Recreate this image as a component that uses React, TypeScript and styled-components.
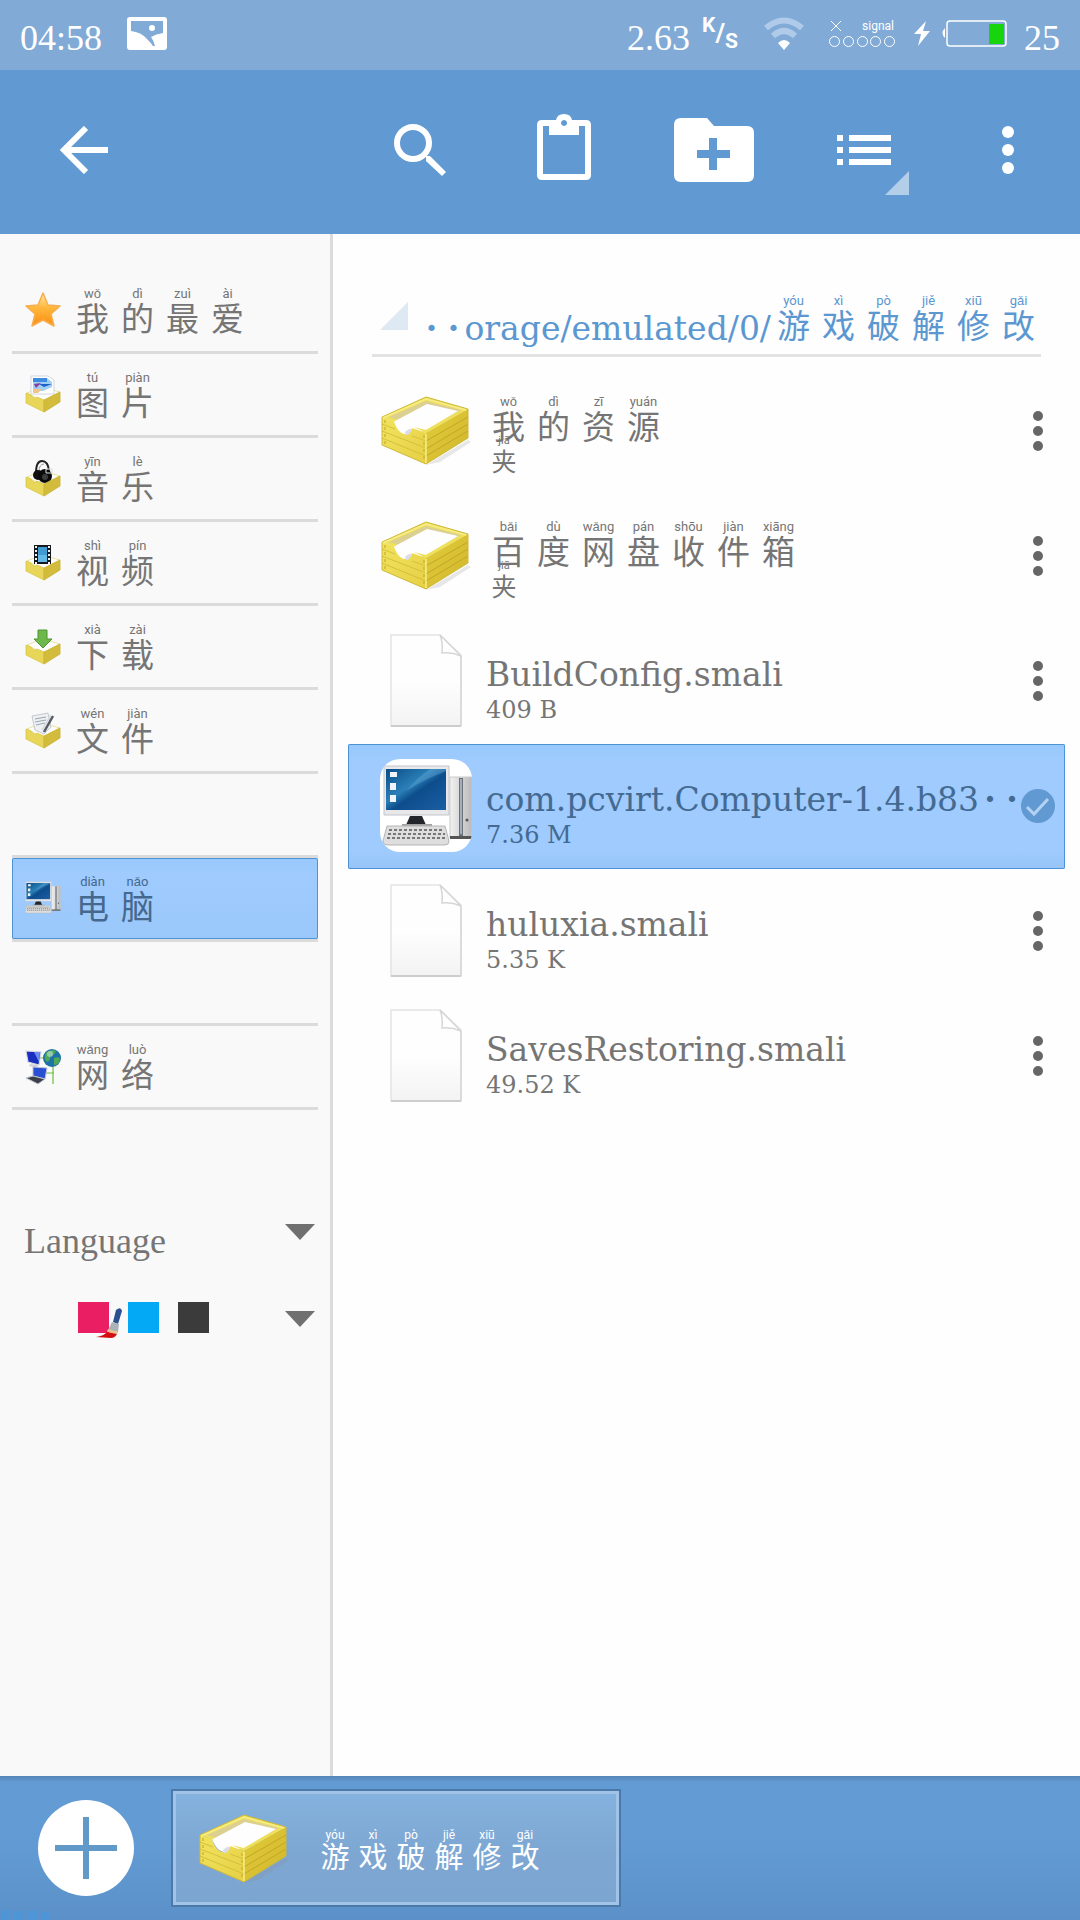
import React from "react";
import styled, { createGlobalStyle } from "styled-components";

const cjk = `"Noto Sans CJK SC", "Noto Sans", sans-serif`;
const serif = `"Liberation Serif", serif`;
const slab = `"DejaVu Serif", "Liberation Serif", serif`;

const GlobalStyle = createGlobalStyle`
  * { box-sizing: border-box; }
  body { margin: 0; background: #fefefe; font-family: ${slab}; color: #757575; }
  button, select { font: inherit; color: inherit; background: none; border: 0; padding: 0; margin: 0; }
  ul { list-style: none; margin: 0; padding: 0; }
  a { color: inherit; text-decoration: none; }
  svg { display: block; flex: none; }
`;

const Page = styled.div`
  display: flex;
  flex-direction: column;
  min-height: 100vh;
`;

/* ---------- status bar ---------- */

const StatusBar = styled.div`
  display: flex;
  align-items: center;
  height: 70px;
  padding: 4px 20px 8px 20px;
  background: #81abd6;
  color: #fff;
  font: 36px/40px ${serif};
`;

const Clock = styled.time`
  margin: 10px 25px 0 0;
`;

const StatusIcons = styled.div`
  display: flex;
  align-items: center;
  margin-left: auto;
`;

const StatusNumber = styled.span`
  margin-top: 10px;
`;

const Speed = styled.span`
  display: flex;
  height: 36px;
  margin: 0 25px 0 12px;
  font: bold 21px/20px Roboto, sans-serif;
`;

const SpeedPart = styled.span<{ $align: string; $size?: number }>`
  align-self: ${(p) => p.$align};
  font-size: ${(p) => p.$size ?? 21}px;
`;

const Signal = styled.span`
  display: flex;
  flex-direction: column;
  gap: 4px;
  width: 66px;
  margin: 0 19px 0 24px;
`;

const SignalTop = styled.span`
  display: flex;
  align-items: center;
  justify-content: space-between;
  padding: 0 1px 0 2px;
  font: 12px/12px Roboto, sans-serif;
`;

const SignalDots = styled.span`
  display: flex;
  justify-content: space-between;
`;

const SignalDot = styled.i`
  width: 11px;
  height: 11px;
  border: 1px solid #fff;
  border-radius: 50%;
`;

/* ---------- tool bar ---------- */

const ToolBar = styled.header`
  display: flex;
  height: 164px;
  background: #6199d3;
  color: #fff;
`;

const Spacer = styled.div`
  flex: 1;
`;

const ToolButton = styled.button<{ $width?: number }>`
  position: relative;
  display: flex;
  align-items: center;
  justify-content: center;
  width: ${(p) => p.$width ?? 144}px;
  padding-bottom: 4px;
`;

const Corner = styled.svg`
  position: absolute;
  right: 27px;
  bottom: 39px;
`;

/* ---------- text with pinyin ---------- */

const sizes = {
  large: { cell: 45, char: 33, line: 33, rt: 13, rtLine: 14 },
  medium: { cell: 38, char: 29, line: 28, rt: 12, rtLine: 12 },
  small: { cell: 36, char: 25, line: 26, rt: 11, rtLine: 12 },
};
type Size = keyof typeof sizes;

const RubyLine = styled.span`
  display: flex;
`;

const RubyCell = styled.ruby<{ $size: Size }>`
  display: flex;
  flex-direction: column-reverse;
  align-items: center;
  width: ${(p) => sizes[p.$size].cell}px;
  font-family: ${cjk};
  font-weight: 400;
  font-size: ${(p) => sizes[p.$size].char}px;
  line-height: ${(p) => sizes[p.$size].line}px;

  rt {
    display: block;
    font: 400 ${(p) => sizes[p.$size].rt}px / ${(p) => sizes[p.$size].rtLine}px
      "Liberation Sans Narrow", Roboto, sans-serif;
  }
`;

function Pinyin({ text, size = "large" }: { text: [string, string][]; size?: Size }) {
  return (
    <RubyLine>
      {text.map(([char, sound], i) => (
        <RubyCell key={i} $size={size}>
          {char}
          <rt>{sound}</rt>
        </RubyCell>
      ))}
    </RubyLine>
  );
}

/* ---------- side bar ---------- */

const Body = styled.div`
  display: flex;
  flex: 1;
`;

const SideBar = styled.nav`
  flex: 0 0 333px;
  padding: 36px 12px 0;
  background: #f9f9f9;
  border-right: 3px solid #dbdbdd;
`;

const SideGroup = styled.ul<{ $spaced?: boolean }>`
  margin-top: ${(p) => (p.$spaced ? 81 : 0)}px;
  border-top: ${(p) => (p.$spaced ? "3px solid #dbdbdb" : "0")};
`;

const SideItem = styled.li`
  border-bottom: 3px solid #dbdbdb;
`;

const SideLink = styled.a<{ $selected?: boolean }>`
  display: flex;
  align-items: center;
  gap: 8px;
  height: 81px;
  padding: 0 12px 1px;
  border-radius: 2px;
  color: ${(p) => (p.$selected ? "#46688c" : "#757575")};
  background: ${(p) => (p.$selected ? "linear-gradient(#97c8fc, #9fcbfe 20%, #9bc8fa)" : "none")};
  box-shadow: ${(p) => (p.$selected ? "inset 0 0 0 1px #4c94d6" : "none")};
`;

const SideOption = styled.div<{ $top: number }>`
  display: flex;
  align-items: flex-start;
  justify-content: space-between;
  margin: ${(p) => p.$top}px 3px 0 12px;
`;

const LanguageSelect = styled.select`
  flex: 1;
  height: 40px;
  appearance: none;
  font: 36px/40px ${serif};
`;

const Arrow = styled.svg<{ $top: number }>`
  margin-top: ${(p) => p.$top}px;
`;

const ThemeButton = styled.button`
  display: flex;
  flex: 1;
  align-items: flex-start;
  justify-content: space-between;
  height: 40px;
  padding-left: 54px;
`;

const Swatches = styled.span`
  position: relative;
  display: flex;
  gap: 19px;
`;

const Swatch = styled.i<{ $color: string }>`
  width: 31px;
  height: 31px;
  background: ${(p) => p.$color};
`;

const Brush = styled.svg`
  position: absolute;
  left: 18px;
  top: 5px;
`;

/* ---------- file list ---------- */

const Main = styled.main`
  flex: 1;
  min-width: 0;
  padding: 60px 15px 0;
`;

const PathBar = styled.div`
  display: flex;
  align-items: flex-end;
  justify-content: space-between;
  height: 63px;
  margin: 0 24px 12px;
  padding: 0 0 5px 8px;
  border-bottom: 3px solid #e3e3e3;
  color: #5b97d0;
  font: 33px/40px ${slab};
`;

const PathText = styled.span`
  display: flex;
  align-items: flex-end;
  white-space: nowrap;
`;

const PathFolder = styled.span`
  padding-bottom: 8px;
`;

const Dot = styled.span`
  display: inline-block;
  width: 22px;
  font-weight: bold;
  text-align: center;
`;

const FileRow = styled.li<{ $selected?: boolean }>`
  display: flex;
  height: 125px;
  padding: 0 9px 2px 30px;
  border-radius: 2px;
  color: ${(p) => (p.$selected ? "#446a92" : "#757575")};
  background: ${(p) => (p.$selected ? "linear-gradient(#97c8fc, #9fcbfe 12%, #9fcbfe 85%, #97c4f6)" : "none")};
  box-shadow: ${(p) => (p.$selected ? "inset 0 0 0 1px #4c94d6" : "none")};
`;

const FileIcon = styled.span`
  display: flex;
  align-items: center;
  justify-content: center;
  width: 96px;
  margin-right: 12px;
`;

const FileText = styled.div<{ $folder?: boolean }>`
  flex: 1;
  min-width: 0;
  padding-top: ${(p) => (p.$folder ? 26 : 36)}px;
  white-space: nowrap;
`;

const FileName = styled.div`
  font: 33px/40px ${slab};
`;

const FileSize = styled.div`
  font: 24px/30px ${slab};
`;

const FolderType = styled.div`
  margin-top: -7px;
`;

const RowAction = styled.button`
  display: flex;
  align-items: center;
  justify-content: center;
  width: 36px;
`;

/* ---------- task bar ---------- */

const TaskBar = styled.footer`
  position: relative;
  display: flex;
  height: 144px;
  padding: 13px 0 13px 38px;
  background: linear-gradient(#5685b8, #5c90c6 3px, #639bd4 6px, #629ad3 50%, #5b91c8);
  color: #fff;
`;

const AddButton = styled.button`
  display: flex;
  align-items: center;
  margin: 0 37px 0 0;
`;

const Task = styled.button`
  display: flex;
  align-items: center;
  width: 450px;
  padding: 2px 23px 0 25px;
  border: 2px solid #4b79aa;
  box-shadow: inset 0 0 0 3px #a0c3e7;
  background: linear-gradient(#84b2de, #7da6d2 60%, #7ca5d0);
`;

const TaskLabel = styled.span`
  margin: 0 0 0 26px;
`;

const Smudge = styled.svg`
  position: absolute;
  left: 0;
  bottom: 0;
`;

/* ---------- drawings ---------- */

function PaperBox() {
  return (
    <svg width="92" height="74" viewBox="0 0 92 74" aria-hidden="true">
      <defs>
        <linearGradient id="boxLeft" x1="0" y1="0" x2="1" y2="1">
          <stop offset="0" stopColor="#f1e35e" />
          <stop offset="1" stopColor="#e6d045" />
        </linearGradient>
        <linearGradient id="boxRight" x1="0" y1="0" x2="1" y2="1">
          <stop offset="0" stopColor="#e3cd3c" />
          <stop offset="1" stopColor="#d0b62a" />
        </linearGradient>
      </defs>
      <path d="M46 71 L88 46 L91 48 L60 68 Z" fill="#8d8d8d" opacity=".2" />
      <path d="M46 3 L88 15 L46 39 L2 23 Z" fill="#efe05c" />
      <path d="M46 7 L81 16 L46 35 L9 23 Z" fill="#dccf92" />
      <path d="M47 10 L78 17 L46 36 L33 40 L15 27 Z" fill="#fefeff" />
      <path d="M34 33 L46 36 L78 18 L88 15 L46 39 Z" fill="#efe05c" />
      <path d="M2 23 L14 27 C17 38 26 46 32 34 L46 39 L46 70 L2 51 Z" fill="url(#boxLeft)" />
      <path d="M14 27 L32 33 L32 35 C27 45 18 38 14 27 Z" fill="#fefeff" />
      <path d="M25 38 Q29 34 32 35 Q30 41 26 41 Z" fill="#dcdce8" />
      <path d="M46 39 L88 15 L88 44 L46 70 Z" fill="url(#boxRight)" />
      <path d="M2 30 L15 35 M2 37 L46 54 M2 44 L46 62 M32 42 L46 47" stroke="#d6c03c" strokeWidth="1" fill="none" />
      <path d="M46 47 L88 23 M46 55 L88 30 M46 62 L88 37" stroke="#c1a728" strokeWidth="1" fill="none" />
      <path d="M5 26 V52 M44 41 V68" stroke="#cfb732" strokeWidth="1.5" strokeDasharray="3 4" fill="none" />
      <path d="M2 23 L46 3 L88 15 V44 L46 70 L2 51 Z" fill="none" stroke="#cdb83a" strokeWidth="1" />
      <path d="M3 24 L46 5 L86 16 M46 40 V69" stroke="#f6ed86" strokeWidth="1.5" fill="none" />
    </svg>
  );
}

function SmallBox({ children }: { children: React.ReactNode }) {
  return (
    <svg width="38" height="38" viewBox="0 0 38 38" aria-hidden="true">
      <path d="M3 18 L18 12 L36 17 L19 26 Z" fill="#fdfdfd" stroke="#e6dc86" strokeWidth=".8" />
      {children}
      <path d="M2 18 L7 20 Q10 25 13 22 L20 25 L20 37 L2 28 Z" fill="#e8d658" stroke="#d8c54a" strokeWidth=".8" />
      <path d="M20 25 L36 17 L36 27 L20 37 Z" fill="#d3bc3c" stroke="#c8b036" strokeWidth=".8" />
    </svg>
  );
}

function StarIcon() {
  return (
    <svg width="38" height="38" viewBox="0 0 38 38" aria-hidden="true">
      <defs>
        <linearGradient id="star" x1="0" y1="0" x2="0" y2="1">
          <stop offset="0" stopColor="#ffeaa0" />
          <stop offset=".45" stopColor="#ffb73c" />
          <stop offset="1" stopColor="#f98d12" />
        </linearGradient>
      </defs>
      <path d="M19 2 L24 14 L36 15 L27 23 L30 35 L19 29 L8 35 L11 23 L2 15 L14 14 Z" fill="url(#star)" stroke="#f6ae50" strokeWidth="1.5" strokeLinejoin="round" />
    </svg>
  );
}

const PictureBox = () => (
  <SmallBox>
    <path d="M7 1 H24 L30 5 V19 H7 Z" fill="#fff" stroke="#c4cbd8" strokeWidth=".8" />
    <path d="M9 3 H23 L28 7 V12 L19 16 H9 Z" fill="#9fcdf4" />
    <path d="M9 3 H23 V7 H9 Z" fill="#3d8be0" />
    <path d="M15 9 H28 L20 12 Z" fill="#1c62c4" />
    <path d="M10 9 L17 8 L12 13 Z" fill="#8a3b9e" />
    <path d="M9 14 H18 L14 18 H9 Z" fill="#f2c48c" />
  </SmallBox>
);

const MusicBox = () => (
  <SmallBox>
    <path d="M12 14 Q12 2 18 2 Q24 2 25 12" stroke="#222" strokeWidth="2" fill="none" />
    <path d="M15 13 Q15 5 20 5" stroke="#999" strokeWidth="1" fill="none" />
    <circle cx="14" cy="16" r="5" fill="#111" />
    <circle cx="21" cy="17" r="7" fill="#0b0b0b" />
    <circle cx="21" cy="18" r="3" fill="#3c3c3c" />
    <path d="M22 10 h6 v4 h-6 z" fill="none" stroke="#ddd" strokeWidth="1" />
  </SmallBox>
);

const VideoBox = () => (
  <SmallBox>
    <path d="M10 2 H27 V21 H10 Z" fill="#15191d" />
    <path d="M14 4 H23 V19 H14 Z" fill="#3f9bd1" />
    <path d="M14 12 H23 V19 H14 Z" fill="#62b9e6" />
    <path d="M12 3 V21 M25 3 V21" stroke="#f2f2f2" strokeWidth="2" strokeDasharray="2 2" />
  </SmallBox>
);

const DownloadBox = () => (
  <SmallBox>
    <path d="M14 3 H23 V12 H28 L19 21 L10 12 H14 Z" fill="#6cb84a" stroke="#4f9433" strokeWidth="1" />
  </SmallBox>
);

const DocumentBox = () => (
  <SmallBox>
    <path d="M8 5 L24 2 L27 16 L20 23 L11 19 Z" fill="#eef1f4" stroke="#b7bdc4" strokeWidth=".8" />
    <path d="M11 8 L22 6 M11 11 L22 9 M12 14 L21 12" stroke="#9aa5b2" strokeWidth="1" />
    <path d="M29 5 L20 21" stroke="#555b61" strokeWidth="2.5" />
    <path d="M27 4 L18 19" stroke="#d6dade" strokeWidth="1.5" />
  </SmallBox>
);

function ComputerArt() {
  return (
    <>
      <defs>
        <linearGradient id="screen" x1="0" y1="0" x2="1" y2="1">
          <stop offset="0" stopColor="#0a4c86" />
          <stop offset=".4" stopColor="#2b7fb8" />
          <stop offset=".55" stopColor="#0d4d8c" />
          <stop offset="1" stopColor="#1a5fa4" />
        </linearGradient>
        <linearGradient id="tower" x1="0" y1="0" x2="1" y2="0">
          <stop offset="0" stopColor="#f2f2f2" />
          <stop offset="1" stopColor="#b9b9b9" />
        </linearGradient>
      </defs>
      <path d="M70 18 H92 V79 H70 Z" fill="url(#tower)" stroke="#c9c9c9" strokeWidth="1" />
      <path d="M79 19 H83 V77 H79 Z" fill="#6a737d" />
      <path d="M81 20 V75" stroke="#e3e8ee" strokeWidth="1" />
      <circle cx="87" cy="61" r="1.5" fill="#555" />
      <path d="M70 77 H92 V80 H70 Z" fill="#555" />
      <path d="M4 7 H69 V56 H4 Z" fill="#e8e8ea" stroke="#c3c5c9" strokeWidth="1" />
      <path d="M6 10 H66 V51 H6 Z" fill="url(#screen)" />
      <path d="M26 32 Q45 20 66 12 V10 H50 Q36 20 26 32 Z" fill="#5fa6d2" opacity=".45" />
      <path d="M10 13 h7 v5 h-7 z M10 24 h6 v7 h-6 z M10 36 h6 v7 h-6 z" fill="#eef4fa" />
      <path d="M30 57 H42 L46 66 H26 Z" fill="#22262b" />
      <path d="M22 65 H52 V68 H22 Z" fill="#a2a2a4" />
      <path d="M7 67 H65 L69 82 Q69 86 65 86 H7 Q3 86 3 82 Z" fill="#dedede" stroke="#b5b5b5" strokeWidth="1" />
      <path d="M9 71 H64 M8 75 H65 M7 79 H66" stroke="#777" strokeWidth="2" strokeDasharray="3 2" />
    </>
  );
}

const ComputerSmall = () => (
  <svg width="38" height="38" viewBox="0 0 96 96" aria-hidden="true">
    <ComputerArt />
  </svg>
);

const ComputerApp = () => (
  <svg width="92" height="93" viewBox="0 0 92 93" aria-hidden="true">
    <defs>
      <clipPath id="appShape">
        <rect width="92" height="93" rx="20" />
      </clipPath>
    </defs>
    <g clipPath="url(#appShape)">
      <rect width="92" height="93" fill="#fff" />
      <ComputerArt />
    </g>
  </svg>
);

const NetworkIcon = () => (
  <svg width="38" height="38" viewBox="0 0 38 38" aria-hidden="true">
    <path d="M14 11 H24 M20 26 H30 M29 18 V37" stroke="#6abf3c" strokeWidth="1.2" />
    <path d="M2 4 L17 5 L15 18 L4 15 Z" fill="#1a2fbf" stroke="#d4d8e4" strokeWidth="1.2" />
    <path d="M10 5 L16 5 L15 15 Z" fill="#6f8df0" />
    <path d="M6 17 L14 18 L13 21 L5 19 Z" fill="#cfd2d8" />
    <path d="M9 20 L23 21 L21 32 L9 29 Z" fill="#2b4fd2" stroke="#b9c0d4" strokeWidth="1" />
    <path d="M2 31 L9 29 L21 32 L14 37 Z" fill="#3a3f4a" stroke="#c0c4cc" strokeWidth="1" />
    <circle cx="28" cy="11" r="9" fill="#1d73a8" />
    <path d="M22 6 Q27 1 32 4 Q30 9 26 9 Q27 13 23 15 Q19 11 22 6 Z M30 11 Q35 9 36 12 Q35 18 30 18 Z" fill="#4fa858" />
    <circle cx="26" cy="7" r="3" fill="#bfe6dc" opacity=".6" />
  </svg>
);

const PageIcon = () => (
  <svg width="76" height="98" viewBox="0 0 76 98" aria-hidden="true">
    <defs>
      <linearGradient id="sheet" x1="0" y1="0" x2="0" y2="1">
        <stop offset=".5" stopColor="#fefefe" />
        <stop offset="1" stopColor="#f3f3f3" />
      </linearGradient>
    </defs>
    <path d="M3 3 H52 L73 23 V94 H3 Z" fill="url(#sheet)" stroke="#e4e4e4" strokeWidth="1.5" />
    <path d="M3 94 H73" stroke="#cdcdcd" strokeWidth="2" />
    <path d="M73 24 V94" stroke="#d6d6d6" strokeWidth="1.5" />
    <path d="M52 3 L73 24 Q64 20 54 21 Q55 10 52 3 Z" fill="#fff" stroke="#d6d6d6" strokeWidth="1.5" />
  </svg>
);

const MoreDots = () => (
  <svg width="12" height="42" viewBox="0 0 12 42" aria-hidden="true" fill="#666">
    <circle cx="6" cy="6" r="5" />
    <circle cx="6" cy="21" r="5" />
    <circle cx="6" cy="36" r="5" />
  </svg>
);

const CheckCircle = () => (
  <svg width="36" height="36" viewBox="0 0 36 36" aria-hidden="true">
    <circle cx="18" cy="18" r="17" fill="#6199d3" />
    <path d="M7 19 L14 26 L28 11" stroke="#b5d2f2" strokeWidth="3" fill="none" />
  </svg>
);

const DownArrow = ({ top }: { top: number }) => (
  <Arrow $top={top} width="30" height="16" viewBox="0 0 30 16" aria-hidden="true">
    <path d="M0 0 H30 L15 16 Z" fill="#707070" />
  </Arrow>
);

/* ---------- data ---------- */

type Entry = { icon: React.ReactNode; text: [string, string][] };

const places: Entry[] = [
  { icon: <StarIcon />, text: [["我", "wǒ"], ["的", "dì"], ["最", "zuì"], ["爱", "ài"]] },
  { icon: <PictureBox />, text: [["图", "tú"], ["片", "piàn"]] },
  { icon: <MusicBox />, text: [["音", "yīn"], ["乐", "lè"]] },
  { icon: <VideoBox />, text: [["视", "shì"], ["频", "pín"]] },
  { icon: <DownloadBox />, text: [["下", "xià"], ["载", "zài"]] },
  { icon: <DocumentBox />, text: [["文", "wén"], ["件", "jiàn"]] },
];
const computer: Entry = { icon: <ComputerSmall />, text: [["电", "diàn"], ["脑", "nǎo"]] };
const network: Entry = { icon: <NetworkIcon />, text: [["网", "wǎng"], ["络", "luò"]] };

const gameMods: [string, string][] = [
  ["游", "yóu"], ["戏", "xì"], ["破", "pò"], ["解", "jiě"], ["修", "xiū"], ["改", "gǎi"],
];

const folders: [string, string][][] = [
  [["我", "wǒ"], ["的", "dì"], ["资", "zī"], ["源", "yuán"]],
  [["百", "bǎi"], ["度", "dù"], ["网", "wǎng"], ["盘", "pán"], ["收", "shōu"], ["件", "jiàn"], ["箱", "xiāng"]],
];

const files = [
  { name: "BuildConfig.smali", size: "409 B" },
  { name: "com.pcvirt.Computer-1.4.b83", size: "7.36 M", selected: true },
  { name: "huluxia.smali", size: "5.35 K" },
  { name: "SavesRestoring.smali", size: "49.52 K" },
];

function Place({ entry, selected }: { entry: Entry; selected?: boolean }) {
  return (
    <SideItem>
      <SideLink href="#" $selected={selected} aria-current={selected ? "page" : undefined}>
        {entry.icon}
        <Pinyin text={entry.text} />
      </SideLink>
    </SideItem>
  );
}

export default function App() {
  return (
    <Page>
      <GlobalStyle />
      <StatusBar>
        <Clock>04:58</Clock>
        <svg width="40" height="33" viewBox="0 0 40 33" aria-hidden="true">
          <path
            fillRule="evenodd"
            fill="#fff"
            d="M3 0 H37 Q40 0 40 3 V30 Q40 33 37 33 H3 Q0 33 0 30 V3 Q0 0 3 0 Z M4 4 V14 Q14 15 20 22 Q24 26 26 29 H28 Q27 24 24 20 Q29 17 36 16 V4 Z"
          />
          <circle cx="25" cy="11" r="3" fill="#fff" />
        </svg>
        <StatusIcons>
          <StatusNumber>2.63</StatusNumber>
          <Speed>
            <SpeedPart $align="flex-start">K</SpeedPart>
            <SpeedPart $align="center" $size={26}>/</SpeedPart>
            <SpeedPart $align="flex-end">S</SpeedPart>
          </Speed>
          <svg width="42" height="33" viewBox="0 0 42 33" aria-hidden="true">
            <path d="M3 11 Q21 -4 39 11" fill="none" stroke="#b0cbea" strokeWidth="6" />
            <path d="M10 19 Q21 9 32 19" fill="none" stroke="#b0cbea" strokeWidth="6" />
            <path d="M21 33 L15 26 Q21 20 27 26 Z" fill="#fff" />
          </svg>
          <Signal>
            <SignalTop>
              <svg width="10" height="10" viewBox="0 0 10 10" aria-hidden="true">
                <path d="M0 0 L10 10 M10 0 L0 10" stroke="#fff" />
              </svg>
              signal
            </SignalTop>
            <SignalDots>
              <SignalDot /><SignalDot /><SignalDot /><SignalDot /><SignalDot />
            </SignalDots>
          </Signal>
          <svg width="16" height="25" viewBox="0 0 16 25" aria-hidden="true">
            <path d="M12 0 L0 13 H7 L4 25 L16 10 H9 Z" fill="#fff" />
          </svg>
          <svg width="94" height="28" viewBox="3 0 94 28" aria-hidden="true">
            <path d="M18 9 Q13 14 18 19 Z" fill="#fff" />
            <rect x="20" y="2" width="59" height="25" rx="3" fill="none" stroke="#fff" strokeWidth="1.5" />
            <rect x="62" y="5" width="15" height="20" fill="#17d40c" />
          </svg>
          <StatusNumber>25</StatusNumber>
        </StatusIcons>
      </StatusBar>

      <ToolBar>
        <ToolButton $width={168} aria-label="Back">
          <svg width="48" height="48" viewBox="0 0 48 48" fill="none" stroke="#fff" strokeWidth="6">
            <path d="M26 2 L4 24 L26 46 M5 24 H48" />
          </svg>
        </ToolButton>
        <Spacer />
        <ToolButton aria-label="Search">
          <svg width="54" height="54" viewBox="0 0 54 54" fill="none" stroke="#fff">
            <circle cx="20" cy="20" r="16" strokeWidth="6" />
            <path d="M33 33 L37 33 L53 49 L49 53 L33 38 Z" fill="#fff" stroke="none" />
          </svg>
        </ToolButton>
        <ToolButton aria-label="Paste">
          <svg width="54" height="72" viewBox="0 3 54 72">
            <path
              fillRule="evenodd"
              fill="#fff"
              d="M5 9 H19 Q20 3 27 3 Q34 3 35 9 H49 Q54 9 54 14 V64 Q54 69 49 69 H5 Q0 69 0 64 V14 Q0 9 5 9 Z M6 15 V63 H48 V15 H42 V24 H12 V15 Z M27 9 a3 3 0 1 0 .1 0 Z"
            />
          </svg>
        </ToolButton>
        <ToolButton $width={156} aria-label="New folder">
          <svg width="80" height="64" viewBox="0 0 80 64">
            <path
              fillRule="evenodd"
              fill="#fff"
              d="M7 0 H33 L40 8 H73 Q80 8 80 15 V57 Q80 64 73 64 H7 Q0 64 0 57 V7 Q0 0 7 0 Z M35 20 V32 H23 V40 H35 V52 H43 V40 H56 V32 H43 V20 Z"
            />
          </svg>
        </ToolButton>
        <ToolButton aria-label="List view">
          <svg width="54" height="30" viewBox="0 0 54 30" fill="#fff">
            <path d="M0 0 H6 V6 H0 Z M12 0 H54 V6 H12 Z M0 12 H6 V18 H0 Z M12 12 H54 V18 H12 Z M0 24 H6 V30 H0 Z M12 24 H54 V30 H12 Z" />
          </svg>
          <Corner width="24" height="24" viewBox="0 0 24 24" aria-hidden="true">
            <path d="M24 0 V24 H0 Z" fill="#b2cee9" />
          </Corner>
        </ToolButton>
        <ToolButton aria-label="More">
          <svg width="12" height="48" viewBox="0 0 12 48" fill="#fff">
            <circle cx="6" cy="6" r="6" />
            <circle cx="6" cy="24" r="6" />
            <circle cx="6" cy="42" r="6" />
          </svg>
        </ToolButton>
      </ToolBar>

      <Body>
        <SideBar>
          <SideGroup>
            {places.map((entry, i) => (
              <Place key={i} entry={entry} />
            ))}
          </SideGroup>
          <SideGroup $spaced>
            <Place entry={computer} selected />
          </SideGroup>
          <SideGroup $spaced>
            <Place entry={network} />
          </SideGroup>
          <SideOption $top={111}>
            <LanguageSelect aria-label="Language" defaultValue="language">
              <option value="language">Language</option>
            </LanguageSelect>
            <DownArrow top={3} />
          </SideOption>
          <SideOption $top={41}>
            <ThemeButton aria-label="Theme colours">
              <Swatches>
                <Swatch $color="#e91e63" />
                <Swatch $color="#03a9f4" />
                <Swatch $color="#3b3b3b" />
                <Brush width="28" height="32" viewBox="0 0 28 32" aria-hidden="true">
                  <path d="M20 3 Q25 -1 26 4 L22 17 L17 15 Z" fill="#2c4f8f" />
                  <path d="M16 15 L23 17 L22 25 L12 23 Z" fill="#aab4b8" />
                  <path d="M12 22 L22 25 L21 27 L11 25 Z" fill="#f0c08a" />
                  <path d="M11 25 L21 27 Q19 31 15 31 L0 30 Q8 29 11 25 Z" fill="#d40f0f" />
                </Brush>
              </Swatches>
              <DownArrow top={9} />
            </ThemeButton>
          </SideOption>
        </SideBar>

        <Main>
          <PathBar>
            <svg width="30" height="47" viewBox="0 0 30 47" aria-hidden="true">
              <path d="M28 0 V28 H0 Z" fill="#dfe9f4" />
            </svg>
            <PathText>
              <Dot>·</Dot>
              <Dot>·</Dot>
              orage/emulated/0/
              <PathFolder>
                <Pinyin text={gameMods} />
              </PathFolder>
            </PathText>
          </PathBar>
          <ul>
            {folders.map((name, i) => (
              <FileRow key={i}>
                <FileIcon>
                  <PaperBox />
                </FileIcon>
                <FileText $folder>
                  <Pinyin text={name} />
                  <FolderType>
                    <Pinyin text={[["夹", "jiā"]]} size="small" />
                  </FolderType>
                </FileText>
                <RowAction aria-label="More">
                  <MoreDots />
                </RowAction>
              </FileRow>
            ))}
            {files.map((file) => (
              <FileRow key={file.name} $selected={file.selected}>
                <FileIcon>{file.selected ? <ComputerApp /> : <PageIcon />}</FileIcon>
                <FileText>
                  <FileName>
                    {file.name}
                    {file.selected && (
                      <>
                        <Dot>·</Dot>
                        <Dot>·</Dot>
                      </>
                    )}
                  </FileName>
                  <FileSize>{file.size}</FileSize>
                </FileText>
                <RowAction aria-label={file.selected ? "Selected" : "More"}>
                  {file.selected ? <CheckCircle /> : <MoreDots />}
                </RowAction>
              </FileRow>
            ))}
          </ul>
        </Main>
      </Body>

      <TaskBar>
        <AddButton aria-label="New window">
          <svg width="96" height="96" viewBox="0 0 96 96">
            <circle cx="48" cy="48" r="48" fill="#fff" />
            <path d="M48 17 V79 M17 48 H79" stroke="#6199c8" strokeWidth="6" />
          </svg>
        </AddButton>
        <Task>
          <PaperBox />
          <TaskLabel>
            <Pinyin text={gameMods} size="medium" />
          </TaskLabel>
        </Task>
        <Smudge width="54" height="12" viewBox="0 0 54 12" aria-hidden="true">
          <path d="M1 2 H10 V12 H1 Z M14 3 H24 V12 H14 Z M28 3 H37 V12 H28 Z M41 4 H50 V12 H41 Z" fill="#4498e0" opacity=".6" />
        </Smudge>
      </TaskBar>
    </Page>
  );
}
